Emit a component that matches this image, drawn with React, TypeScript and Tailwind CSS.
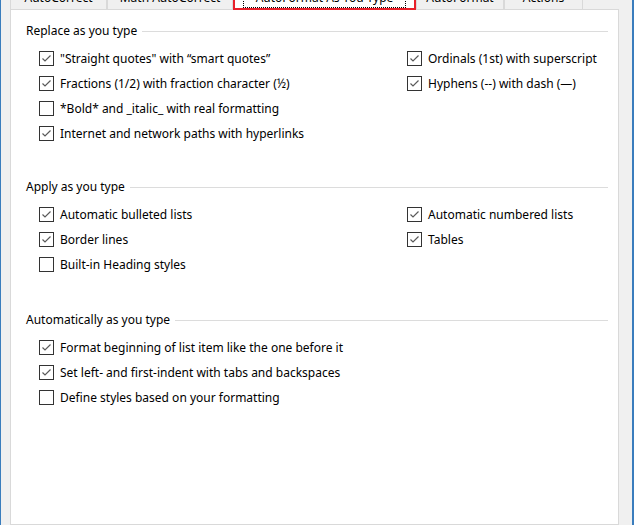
const tabs = [
  { label: 'AutoCorrect', width: 'w-[97px]' },
  { label: 'Math AutoCorrect', width: 'w-[126px]' },
  { label: 'AutoFormat As You Type', width: 'w-[183px]', active: true },
  { label: 'AutoFormat', width: 'w-[88px]' },
  { label: 'Actions', width: 'w-[79px]' },
];

interface IOption {
  label: string;
  checked: boolean;
}

const sections: { title: string; left: IOption[]; right: IOption[]; gap: string }[] = [
  {
    title: 'Replace as you type',
    gap: 'mt-0',
    left: [
      { label: '"Straight quotes" with \u201csmart quotes\u201d', checked: true },
      { label: 'Fractions (1/2) with fraction character (\u00bd)', checked: true },
      { label: '*Bold* and _italic_ with real formatting', checked: false },
      { label: 'Internet and network paths with hyperlinks', checked: true },
    ],
    right: [
      { label: 'Ordinals (1st) with superscript', checked: true },
      { label: 'Hyphens (--) with dash (\u2014)', checked: true },
    ],
  },
  {
    title: 'Apply as you type',
    gap: 'mt-[33px]',
    left: [
      { label: 'Automatic bulleted lists', checked: true },
      { label: 'Border lines', checked: true },
      { label: 'Built-in Heading styles', checked: false },
    ],
    right: [
      { label: 'Automatic numbered lists', checked: true },
      { label: 'Tables', checked: true },
    ],
  },
  {
    title: 'Automatically as you type',
    gap: 'mt-[35px]',
    left: [
      { label: 'Format beginning of list item like the one before it', checked: true },
      { label: 'Set left- and first-indent with tabs and backspaces', checked: true },
      { label: 'Define styles based on your formatting', checked: false },
    ],
    right: [],
  },
];

function CheckBox({ checked }: { checked: boolean }) {
  return (
    <span className="flex h-[15px] w-[15px] shrink-0 items-center justify-center border border-[#333333] bg-white">
      {checked && (
        <svg width="13" height="13" viewBox="0 0 13 13">
          <polyline
            points="2.5,6.5 5,9 10.5,3.5"
            fill="none"
            stroke="#5a5a5a"
            strokeWidth="1.2"
          />
        </svg>
      )}
    </span>
  );
}

function Option({ label, checked }: IOption) {
  return (
    <div className="flex h-[25px] items-center gap-[6px]">
      <CheckBox checked={checked} />
      <span className="whitespace-nowrap">{label}</span>
    </div>
  );
}

export default function App() {
  return (
    <div className="flex h-[525px] w-[634px] flex-col overflow-hidden border-l border-r-2 border-[#3a7dbd] bg-[#f0f0f0] pl-[9px] font-['Segoe_UI','Noto_Sans',sans-serif] text-[12px] leading-4 text-black">
      {/* tab strip, mostly scrolled off the top */}
      <div className="relative z-10 h-[9px]">
        <div className="-mt-[14px] flex h-[23px] items-stretch">
          {tabs.map((tab) =>
            tab.active ? (
              <div
                key={tab.label}
                className={`${tab.width} -mb-[1px] flex items-center justify-center border-2 border-[#e8202a] bg-white px-2`}
              >
                <span className="flex h-full w-full items-center justify-center border border-dotted border-black whitespace-nowrap">
                  {tab.label}
                </span>
              </div>
            ) : (
              <div
                key={tab.label}
                className={`${tab.width} flex items-center justify-center border border-b-0 border-[#d9d9d9] bg-[#f0f0f0] whitespace-nowrap`}
              >
                {tab.label}
              </div>
            )
          )}
        </div>
      </div>

      <div className="h-[516px] w-[609px] border border-[#d9d9d9] bg-white pl-[15px] pr-[10px] pt-[13px]">
        {sections.map((section) => (
          <div key={section.title} className={section.gap}>
            <div className="flex h-4 items-center gap-[5px]">
              <span className="whitespace-nowrap">{section.title}</span>
              <div className="h-px flex-1 bg-[#dcdcdc]" />
            </div>
            <div className="ml-[13px] mt-[7px] grid grid-cols-[368px_1fr]">
              <div className="flex flex-col">
                {section.left.map((opt) => (
                  <Option key={opt.label} {...opt} />
                ))}
              </div>
              <div className="flex flex-col">
                {section.right.map((opt) => (
                  <Option key={opt.label} {...opt} />
                ))}
              </div>
            </div>
          </div>
        ))}
      </div>
    </div>
  );
}
